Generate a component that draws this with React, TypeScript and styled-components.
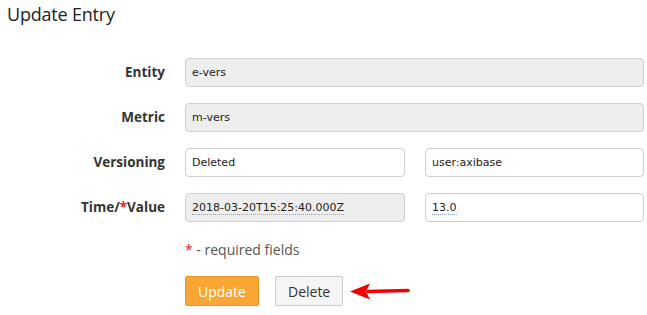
import React from "react";
import styled, { createGlobalStyle } from "styled-components";

const Global = createGlobalStyle`
  html, body { margin: 0; padding: 0; background: #fff; }
  body { font-family: "Open Sans", "Liberation Sans", sans-serif; color: #333; }
`;

const Page = styled.div`
  width: 647px;
  height: 315px;
  box-sizing: border-box;
  padding: 2px 3px 0 7px;
  overflow: hidden;
`;

const Title = styled.h4`
  margin: 0;
  font-size: 18px;
  font-weight: 400;
  line-height: 24px;
  color: #222;
  letter-spacing: -0.2px;
`;

const Form = styled.form`
  margin-top: 32px;
  display: grid;
  grid-template-columns: 158px 1fr;
  column-gap: 20px;
  row-gap: 16px;
  align-items: center;
`;

const Label = styled.label`
  text-align: right;
  font-size: 13.5px;
  font-weight: 700;
  color: #333;
  line-height: 29px;
`;

const Star = styled.span`
  color: #e02020;
`;

const Pair = styled.div`
  display: grid;
  grid-template-columns: 220px 1fr;
  column-gap: 20px;
`;

const Input = styled.div<{ $readonly?: boolean }>`
  box-sizing: border-box;
  height: 29px;
  padding: 0 6px;
  display: flex;
  align-items: center;
  border: 1px solid #cfcfcf;
  border-radius: 4px;
  background: ${(p) => (p.$readonly ? "#eeeeee" : "#ffffff")};
  font-family: "DejaVu Sans", Verdana, sans-serif;
  font-size: 11px;
  color: #222;
`;

const Dotted = styled.span`
  border-bottom: 1px dotted #8aa4c8;
  line-height: 13px;
`;

const Note = styled.div`
  grid-column: 2;
  margin-top: 2px;
  font-size: 14px;
  color: #555;
  line-height: 20px;
`;

const Buttons = styled.div`
  grid-column: 2;
  display: flex;
  align-items: center;
  gap: 16px;
`;

const Button = styled.button<{ $primary?: boolean }>`
  box-sizing: border-box;
  height: 30px;
  padding: 0 12px;
  border-radius: 2px;
  font-family: "Open Sans", "Liberation Sans", sans-serif;
  font-size: 14px;
  border: 1px solid ${(p) => (p.$primary ? "#e8932a" : "#cccccc")};
  background: ${(p) => (p.$primary ? "#f9a634" : "#f5f5f5")};
  color: ${(p) => (p.$primary ? "#ffffff" : "#333333")};
`;

const Arrow = () => (
  <svg width="62" height="22" viewBox="0 0 62 22" style={{ marginLeft: -9 }}>
    <path d="M18 11.5 L58 10.5" stroke="#f00000" strokeWidth="3.6" strokeLinecap="round" />
    <path d="M0 11.5 L20 3.5 L16 11.5 L20 19.5 Z" fill="#f00000" />
  </svg>
);

export default function App() {
  return (
    <Page>
      <Global />
      <Title>Update Entry</Title>
      <Form>
        <Label>Entity</Label>
        <Input $readonly>e-vers</Input>
        <Label>Metric</Label>
        <Input $readonly>m-vers</Input>
        <Label>Versioning</Label>
        <Pair>
          <Input>Deleted</Input>
          <Input>user:axibase</Input>
        </Pair>
        <Label>
          Time/<Star>*</Star>Value
        </Label>
        <Pair>
          <Input $readonly>
            <Dotted>2018-03-20T15:25:40.000Z</Dotted>
          </Input>
          <Input>
            <Dotted>13.0</Dotted>
          </Input>
        </Pair>
        <Note>
          <Star>*</Star> - required fields
        </Note>
        <Buttons>
          <Button type="button" $primary>Update</Button>
          <Button type="button">Delete</Button>
          <Arrow />
        </Buttons>
      </Form>
    </Page>
  );
}
